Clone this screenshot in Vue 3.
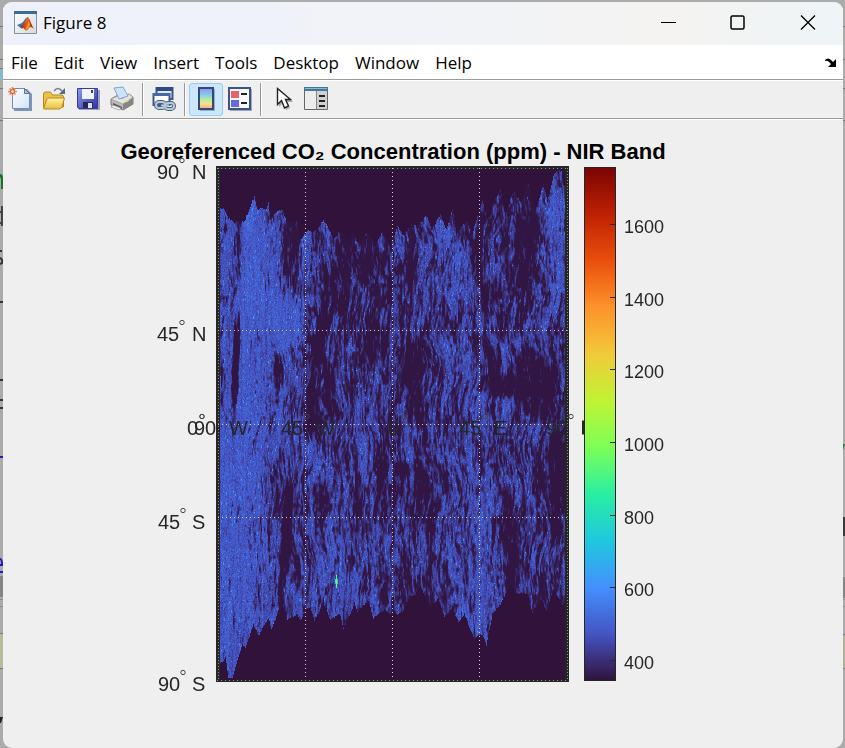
<script setup>
import { onMounted, ref } from 'vue'

const menus = ['File', 'Edit', 'View', 'Insert', 'Tools', 'Desktop', 'Window', 'Help']

const turbo = ['#30123b', '#4454c4', '#4490fe', '#1fc8de', '#29efa2', '#7dff56', '#c1f334', '#f1ca3a', '#fe922a', '#ea4f0d', '#be2102', '#7a0403']

const latLabels = [
  { num: '90', hemi: 'N', x: 157, y: 179, cx: 182 },
  { num: '45', hemi: 'N', x: 157, y: 341, cx: 182 },
  { num: '0', hemi: '', x: 187, y: 435, cx: 202 },
  { num: '45', hemi: 'S', x: 158, y: 529, cx: 183 },
  { num: '90', hemi: 'S', x: 158, y: 691, cx: 183 }
]
const lonLabels = [
  { num: '90', hemi: 'W', x: 194, cx: 202 },
  { num: '45', hemi: 'W', x: 281, cx: 307 },
  { num: '0', hemi: '', x: 388, cx: 404 },
  { num: '45', hemi: 'E', x: 459, cx: 485 },
  { num: '90', hemi: '', x: 546, cx: 571 }
]
const barTicks = [
  { v: 1600, y: 225 }, { v: 1400, y: 298 }, { v: 1200, y: 370 }, { v: 1000, y: 443 },
  { v: 800, y: 516 }, { v: 600, y: 588 }, { v: 400, y: 661 }
]

const X0 = 220
const Y0 = 169
const W = 345
const H = 511

// Swath outline as x, y pairs
const top = [220, 207, 223, 206, 228, 217, 233, 220, 237, 221, 244, 220, 249, 207, 254, 195, 257, 208, 262, 207, 266, 208, 268, 201, 270, 218, 276, 210, 282, 208, 286, 220, 297, 220, 300, 238, 308, 228, 312, 232, 318, 226, 323, 219, 326, 223, 333, 238, 338, 230, 344, 234, 348, 239, 352, 232, 358, 242, 367, 230, 374, 245, 382, 230, 390, 246, 397, 224, 403, 234, 411, 223, 418, 224, 426, 214, 431, 228, 440, 213, 446, 228, 452, 207, 456, 232, 466, 220, 472, 232, 477, 214, 482, 200, 487, 218, 495, 197, 500, 188, 505, 213, 513, 189, 520, 200, 528, 181, 535, 210, 543, 183, 547, 200, 553, 175, 556, 169, 561, 170, 563, 184, 565, 183]
const bottom = [220, 664, 225, 658, 228, 678, 232, 678, 242, 645, 245, 649, 253, 625, 258, 636, 268, 619, 271, 630, 279, 609, 284, 608, 287, 621, 297, 615, 300, 621, 305, 610, 310, 608, 314, 621, 323, 604, 330, 620, 339, 614, 343, 629, 352, 610, 354, 602, 357, 612, 368, 601, 373, 619, 384, 610, 391, 617, 402, 612, 408, 600, 415, 595, 420, 587, 429, 606, 438, 600, 444, 617, 452, 608, 458, 623, 464, 614, 470, 630, 474, 639, 480, 634, 483, 637, 486, 646, 492, 614, 500, 605, 510, 585, 516, 594, 527, 594, 532, 614, 541, 600, 546, 611, 553, 590, 562, 606, 565, 600]

// Coverage of valid samples on a coarse 13 by 11 grid
const cover = [
  [70, 92, 60, 48, 46, 44, 44, 46, 56, 50, 40, 54, 80],
  [66, 99, 62, 52, 46, 42, 50, 54, 62, 52, 44, 50, 84],
  [66, 99, 76, 52, 50, 46, 50, 56, 62, 50, 48, 48, 75],
  [70, 97, 88, 48, 52, 48, 46, 50, 62, 54, 52, 48, 60],
  [74, 96, 78, 46, 56, 54, 44, 48, 60, 50, 52, 38, 46],
  [80, 95, 74, 46, 54, 56, 46, 46, 55, 56, 54, 34, 40],
  [92, 94, 62, 60, 56, 52, 46, 46, 52, 60, 50, 46, 38],
  [94, 88, 58, 52, 58, 52, 46, 42, 54, 70, 52, 48, 44],
  [90, 88, 58, 50, 62, 60, 46, 44, 52, 74, 50, 48, 44],
  [94, 82, 66, 54, 58, 64, 48, 44, 48, 72, 50, 48, 44],
  [94, 80, 70, 54, 58, 64, 48, 44, 48, 76, 48, 46, 44]
]

// Local gaps (negative) and dense areas: x, y, half width, half height, lean, strength
const patches = [
  [292, 254, 7, 38, 0, -1], [340, 272, 8, 48, -0.08, -0.7], [367, 255, 6, 32, 0, -0.7], [314, 378, 6, 52, -0.12, -1],
  [235, 368, 3, 50, -0.04, -1.5], [278, 370, 6, 16, 0, -1.1], [330, 376, 6, 12, 0, -0.9], [412, 366, 9, 26, 0, -0.8],
  [417, 408, 9, 18, 0, -0.9], [425, 480, 9, 42, 0.05, -0.7], [534, 384, 15, 30, 0.2, -1.1], [502, 385, 22, 11, 0.4, -0.9],
  [526, 236, 9, 56, -0.05, -0.8], [285, 540, 4, 62, -0.07, -1.5], [557, 475, 8, 50, 0, -0.8], [510, 545, 8, 46, 0, -0.9],
  [323, 290, 4, 50, 0, -0.8], [270, 494, 9, 26, 0, -0.5], [320, 500, 7, 20, 0, -0.5], [237, 240, 4, 42, -0.05, -0.9],
  [376, 342, 8, 18, 0, -0.8], [411, 262, 4, 40, 0, -0.6], [358, 492, 4, 24, 0, -0.7],
  [330, 395, 5, 22, 0, -0.6], [493, 365, 6, 20, 0, -0.7], [479, 250, 3, 50, 0, -0.7],
  [380, 468, 6, 20, 0, -0.6],
  [254, 250, 9, 60, 0, 0.6], [288, 318, 14, 24, 0, 0.8], [508, 360, 7, 20, 0, 0.5],
  [490, 408, 24, 14, 0, 0.3], [453, 262, 9, 30, 0, 0.3], [442, 230, 6, 20, 0, 0.5],
  [458, 590, 5, 42, 0.2, 0.5], [334, 560, 9, 30, 0, 0.4], [310, 460, 9, 20, 0, 0.4], [404, 452, 10, 9, 0, 0.5],
  [555, 250, 8, 60, -0.05, 0.3], [300, 260, 5, 26, -0.2, 0.6], [322, 250, 5, 26, -0.15, 0.5]
]

function hash(x, y, s) {
  let h = Math.imul(x, 374761393) ^ Math.imul(y, 668265263) ^ Math.imul(s, 2147483556)
  h = Math.imul(h ^ (h >>> 13), 1274126177)
  h = Math.imul(h ^ (h >>> 15), 2246822519)
  return ((h ^ (h >>> 16)) >>> 0) / 4294967296
}
function noise(x, y, s) {
  const xi = Math.floor(x)
  const yi = Math.floor(y)
  let fx = x - xi
  let fy = y - yi
  fx = fx * fx * (3 - 2 * fx)
  fy = fy * fy * (3 - 2 * fy)
  const a = hash(xi, yi, s) * (1 - fx) + hash(xi + 1, yi, s) * fx
  const b = hash(xi, yi + 1, s) * (1 - fx) + hash(xi + 1, yi + 1, s) * fx
  return a * (1 - fy) + b * fy
}
function edge(points, x) {
  let i = 0
  while (i < points.length - 4 && points[i + 2] < x) i += 2
  const f = Math.min(1, Math.max(0, (x - points[i]) / (points[i + 2] - points[i])))
  return points[i + 1] + (points[i + 3] - points[i + 1]) * f
}
function coverage(x, y) {
  const gx = Math.min(11.999, x / W * 12)
  const gy = Math.min(9.999, Math.max(0, (y - 21) / 45))
  const i = Math.floor(gx)
  const j = Math.floor(gy)
  const fx = gx - i
  const fy = gy - j
  let c = ((cover[j][i] * (1 - fx) + cover[j][i + 1] * fx) * (1 - fy) +
    (cover[j + 1][i] * (1 - fx) + cover[j + 1][i + 1] * fx) * fy) / 100
  for (const [px, py, rx, ry, lean, k] of patches) {
    const dy = y + Y0 - py
    const dx = x + X0 - px - dy * lean
    const d = (dx / rx) ** 2 + (dy / ry) ** 2
    if (d < 2) c += k * 0.38 * Math.min(1, (2 - d) * 0.7)
  }
  return c
}
const rgb = turbo.map(c => [1, 3, 5].map(i => parseInt(c.slice(i, i + 2), 16)))
function colour(t) {
  const p = Math.min(10.999, Math.max(0, t * 11))
  const i = Math.floor(p)
  return rgb[i].map((v, k) => v + (rgb[i + 1][k] - v) * (p - i))
}

const map = ref(null)

onMounted(() => {
  const ctx = map.value.getContext('2d')
  const img = ctx.createImageData(W, H)
  for (let x = 0; x < W; x++) {
    const t0 = edge(top, x + X0) - Y0 + hash(x, 1, 9) * 2
    const b0 = edge(bottom, x + X0) - Y0 - hash(x, 2, 9) * 2
    for (let y = 0; y < H; y++) {
      let t = 0
      if (y >= t0 && y <= b0) {
        const wx = x + 9 * noise(x / 30, y / 40, 7)
        const n = 0.24 * noise(wx / 3.2, y / 26, 1) + 0.32 * noise(wx / 1.6, y / 10, 2) +
          0.16 * noise(wx / 8, y / 30, 3) + 0.28 * noise(wx / 1.2, y / 4, 4)
        const c = coverage(x, y)
        const m = Math.min(1, Math.max(0, (n - 0.5 + (c - 0.5) * 0.55) / 0.22 + 0.44))
        const grain = hash(x, y, 5) * 0.6 + hash(x, y >> 1, 15) * 0.4
        const dense = Math.min(1, Math.max(0, c - 0.4))
        const bright = 0.056 + 0.032 * dense + 0.034 * noise(x / 1.5, y / 26, 6)
        t = 0.006 + m * (bright + (grain - 0.5) * 0.07)
        if (m > 0.5 && hash(x, Math.floor(y / 3), 8) > 0.975) t += 0.035 + 0.035 * grain
        if (m > 0.6 && hash(x, y, 11) > 0.996) t += 0.1
      }
      const gx = Math.abs(x + X0 - 336)
      if (gx < 2 && Math.abs(y + Y0 - 581) < 7 - gx * 4) t = (gx ? 0.24 : 0.36) + 0.14 * hash(x, y, 12)
      const o = (y * W + x) * 4
      const col = colour(t)
      img.data[o] = col[0]
      img.data[o + 1] = col[1]
      img.data[o + 2] = col[2]
      img.data[o + 3] = 255
    }
  }
  ctx.putImageData(img, 0, 0)
})
</script>

<template>
  <div class="desktop">
    <svg class="behind left" width="3" height="748" aria-hidden="true">
      <path d="M0 26.500h3M0 59.500h3M0 68.500h3M0 88.500h3M0 120.500h3" stroke="#777" />
      <path d="M0 69h3v11H0z" fill="#86b9d3" />
      <path d="M0 174q3 0 3 4v11H1v-10l-1-2z" fill="#17752a" />
      <path d="M0 211h1v-5h2v20H1v-2H0v-2h1v-9H0z" fill="#444" />
      <path d="M0 251h2M0 258q3 1 2 5l-2 1M0 302h3M0 380h3M0 400h3M0 408h3" stroke="#333" stroke-width="2" fill="none" />
      <path d="M0 457h3M0 559q2 0 2 6H0M0 572h3" stroke="#2318c8" stroke-width="2" fill="none" />
      <path d="M0 576h3v21H0z" fill="#858585" />
      <path d="M0 599.500h3M0 606.500h3" stroke="#8c8c8c" />
      <path d="M0 634h3v34H0z" fill="#b9b99c" />
      <path d="M0 633.500h3M0 668.500h3" stroke="#777" />
      <path d="M0 717h3l-2 6H0z" fill="#222" />
    </svg>
    <svg class="behind right" width="3" height="748" aria-hidden="true">
      <path d="M0 26.500h3M0 59.500h3M0 88.500h3M0 120.500h3" stroke="#777" />
      <path d="M0 444h3l-2 6H0z" fill="#1f8035" />
      <path d="M0 517h3v19H0z" fill="#3c3c3c" />
      <path d="M0 577h3v21H0z" fill="#858585" />
      <path d="M0 599.500h3M0 606.500h3" stroke="#8c8c8c" />
      <path d="M0 634h3v34H0z" fill="#b0b095" />
      <path d="M0 634.500h3M0 668.500h3" stroke="#777" />
    </svg>

    <main class="window">
      <header class="titlebar">
        <svg class="logo" width="24" height="24" viewBox="0 0 24 24" aria-hidden="true">
          <defs>
            <linearGradient id="logoBg" x2="1" y2="1"><stop stop-color="#fff" /><stop offset="1" stop-color="#d4dae0" /></linearGradient>
            <linearGradient id="logoFlame"><stop stop-color="#8c1d12" /><stop offset=".5" stop-color="#e8641b" /><stop offset="1" stop-color="#8d1c13" /></linearGradient>
          </defs>
          <path d="M.5.5h22v22H.5z" fill="url(#logoBg)" stroke="#8b9199" />
          <path d="M0 0h23v3H0z" fill="#3c6a9c" />
          <path d="M3 14l5-2 4-5 2-1-3 7-3 5z" fill="#3a78b5" />
          <path d="M6 16c4-2 5-8 8-10 2 2 3 7 6 12-2-2-4-3-5-1-2 3-3 3-4 2-1-2-3-3-5-3z" fill="url(#logoFlame)" />
          <path d="M14 6c1 4 1 7-3 13 3-1 4-3 5-5z" fill="#f4a028" />
        </svg>
        <h1>Figure 8</h1>
        <div class="controls">
          <button aria-label="Minimize"><svg width="16" height="16"><path d="M1 7.500h15" stroke="#000" /></svg></button>
          <button aria-label="Maximize"><svg width="16" height="16"><rect x="1" y="1" width="13" height="13" rx="1.500" fill="none" stroke="#000" stroke-width="1.500" /></svg></button>
          <button aria-label="Close"><svg width="16" height="16"><path d="M1 .5l14 14M15 .5l-14 14" stroke="#000" stroke-width="1.300" /></svg></button>
        </div>
      </header>

      <nav class="menubar">
        <button v-for="m in menus" :key="m">{{ m }}</button>
        <button class="dock" aria-label="Dock figure">
          <svg width="12" height="9" viewBox="0 0 12 9"><path d="M0 2q3-3 6 0l2 2 3-3v8H3l3-3-2-2Q2 2 0 3z" fill="#000" /></svg>
        </button>
      </nav>

      <div class="toolbar" role="toolbar" aria-label="Figure toolbar">
        <button aria-label="New figure">
          <svg width="26" height="26" viewBox="0 0 26 26">
            <defs><linearGradient id="paper" x2="1" y2="1"><stop stop-color="#fff" /><stop offset="1" stop-color="#cfe3f7" /></linearGradient></defs>
            <path d="M7 3h13l5 5v17H7z" fill="#7f93b4" />
            <path d="M5.500 2.500h12l5 5v15h-17z" fill="url(#paper)" stroke="#6f8db8" />
            <path d="M17.500 2.500v5h5z" fill="#a9bfdd" stroke="#56729f" />
            <path d="M5.500 1v9M1 5.500h9M2.500 2.500l6 6M8.500 2.500l-6 6" stroke="#e7825c" stroke-width="1.500" />
            <circle cx="5.500" cy="5.500" r="2" fill="#ffd5a0" stroke="#d95432" />
          </svg>
        </button>
        <button aria-label="Open file">
          <svg width="26" height="26" viewBox="0 0 26 26">
            <defs><linearGradient id="folder" x2="0" y2="1"><stop stop-color="#fff5a8" /><stop offset="1" stop-color="#e9bd3c" /></linearGradient></defs>
            <path d="M2.500 21V8q0-2 2-2h5l2 3h9q2 0 2 2v10z" fill="#e8c04c" stroke="#b88a18" />
            <path d="M2.500 22.500L6 13q0-1 2-1h15.500L21 21q-1 2-3 2H4q-2 0-1.500-.5z" fill="url(#folder)" stroke="#b98912" />
            <path d="M13 5q4-5 8 0" fill="none" stroke="#6c8294" stroke-width="1.500" /><path d="M24 2v6h-6z" fill="#526c80" />
          </svg>
        </button>
        <button aria-label="Save figure">
          <svg width="26" height="26" viewBox="0 0 26 26">
            <defs><linearGradient id="disk" x2="1" y2="1"><stop stop-color="#8c9ce9" /><stop offset="1" stop-color="#3030a6" /></linearGradient></defs>
            <path d="M4 4h21v20H4z" fill="#a1a1bd" />
            <path d="M2.500 2.500h20v20h-19l-1-1z" fill="url(#disk)" stroke="#343b9d" />
            <path d="M7 3h12v10H7z" fill="#eef5fc" /><path d="M16 4h2v3h-2z" fill="#445" />
            <path d="M8 16h10v6H8z" fill="#27275a" /><path d="M13 17h4v5h-4z" fill="#dde2ef" />
          </svg>
        </button>
        <button aria-label="Print figure">
          <svg width="26" height="26" viewBox="0 0 26 26">
            <path d="M2 13l7-4 3 3 8-4 4 3v7l-10 6-12-5z" fill="#b9b9b9" stroke="#777" />
            <path d="M2 13l12 5 10-7-4-3-7 5-4-3z" fill="#e4e4e2" stroke="#999" stroke-width=".6" />
            <path d="M5 2l9-1 5 9-9 3z" fill="#cbe3fb" stroke="#86a3c8" />
            <path d="M14 18v6l10-6v-6z" fill="#858585" /><path d="M4 17l9 4v2l-9-4z" fill="#555" /><path d="M4 19l8 3-2 2-8-3z" fill="#eee" stroke="#888" stroke-width=".6" />
            <path d="M17 16l3-2" stroke="#d6e257" stroke-width="1.500" />
          </svg>
        </button>
        <span class="sep"></span>
        <button aria-label="Link plot">
          <svg width="26" height="26" viewBox="0 0 26 26">
            <path d="M5.500 2h16v11h-16z" fill="#dce6f4" stroke="#3c5689" stroke-width="2" /><path d="M5 1h17v4H5z" fill="#2f4b82" />
            <path d="M2.500 8h16v11h-16z" fill="#fff" stroke="#3c5689" stroke-width="2" /><path d="M2 7h17v3H2z" fill="#4669a2" />
            <g fill="none" stroke="#4b6078" stroke-width="4"><rect x="5" y="16" width="9" height="6" rx="3" /><rect x="14" y="17" width="9" height="6" rx="3" /></g>
            <g fill="none" stroke="#b6c9dd" stroke-width="2"><rect x="5" y="16" width="9" height="6" rx="3" /><rect x="14" y="17" width="9" height="6" rx="3" /><path d="M10 19.500h8" /></g>
          </svg>
        </button>
        <span class="sep"></span>
        <button class="on" aria-label="Insert colorbar" aria-pressed="true">
          <svg width="26" height="26" viewBox="0 0 26 26">
            <defs><linearGradient id="bars" x2="0" y2="1"><stop stop-color="#9c8be8" /><stop offset=".3" stop-color="#83c8ef" /><stop offset=".55" stop-color="#b4eba0" /><stop offset=".75" stop-color="#f6e28a" /><stop offset="1" stop-color="#f4a08b" /></linearGradient></defs>
            <path d="M7 3h15v22H7z" fill="#99aac6" /><path d="M6 2h14v21H6z" fill="url(#bars)" stroke="#33497d" stroke-width="2" />
          </svg>
        </button>
        <button aria-label="Insert legend">
          <svg width="26" height="26" viewBox="0 0 26 26">
            <path d="M3 3h22v22H3z" fill="#9ba9c4" /><path d="M2 2h21v21H2z" fill="#f7f9fe" stroke="#3d5488" stroke-width="2" />
            <path d="M4 5h8v7H4z" fill="#e86464" /><path d="M4 14h8v7H4z" fill="#6969e3" /><path d="M14 8h6M14 17h6" stroke="#222" stroke-width="2" />
          </svg>
        </button>
        <span class="sep"></span>
        <button aria-label="Edit plot">
          <svg width="26" height="26" viewBox="0 0 26 26">
            <path d="M10 4v17l4-4 3 7 4-2-3-6h6z" fill="#aaa" /><path d="M8.500 2.500v16l4-4 3 7.500 4-2-3-6.500h5z" fill="#fff" stroke="#222" stroke-width="1.400" />
          </svg>
        </button>
        <button aria-label="Open property inspector">
          <svg width="26" height="26" viewBox="0 0 26 26">
            <path d="M1.500 1.500h23v22h-23z" fill="#f4f4f4" stroke="#666" /><path d="M1 1h24v4H1z" fill="#42789c" /><path d="M2 2h22v1H2z" fill="#8bb7cf" />
            <path d="M2 5h11v18H2z" fill="#ededed" /><path d="M13.500 5v18" stroke="#888" /><path d="M14 5h10v18H14z" fill="#cfcfcf" />
            <path d="M16 10h6M16 15h6M16 20h6" stroke="#222" stroke-width="2" />
          </svg>
        </button>
      </div>

      <section class="figure">
        <svg class="chart" viewBox="3 119 840 629" role="img" aria-label="CO2 concentration map">
          <defs>
            <linearGradient id="turbo" x1="0" y1="1" x2="0" y2="0">
              <stop v-for="(c, i) in turbo" :key="c" :offset="i / 11" :stop-color="c" />
            </linearGradient>
          </defs>

          <text class="title" x="393" y="159" text-anchor="middle">Georeferenced CO₂ Concentration (ppm) - NIR Band</text>

          <rect x="216" y="166" width="353" height="516" fill="#262626" />
          <foreignObject :x="X0" :y="Y0" :width="W" :height="H">
            <canvas ref="map" :width="W" :height="H"></canvas>
          </foreignObject>

          <g class="frame">
            <path d="M217 168.500H568M217 680.500H568" stroke-dasharray="1 3" />
            <path d="M218.500 168V681M567.500 168V681" stroke-dasharray="1 2" />
          </g>
          <g class="grid">
            <path d="M305.500 168V680M392.500 168V680M479.500 168V680" />
            <path d="M218 330.500H567M218 424.500H567M218 517.500H567" />
          </g>

          <g class="axis">
            <g v-for="l in latLabels" :key="l.y">
              <text :x="l.x" :y="l.y">{{ l.num }}</text>
              <text :x="192" :y="l.y">{{ l.hemi }}</text>
              <circle :cx="l.cx" :cy="l.y - 18.500" r="2.200" />
            </g>
            <g v-for="l in lonLabels" :key="l.x">
              <text :x="l.x" y="435">{{ l.num }}</text>
              <text :x="l.x + 35" y="435">{{ l.hemi }}</text>
              <circle :cx="l.cx" cy="416.500" r="2.200" />
            </g>
            <path d="M583 420.500v14" stroke="#262626" stroke-width="2" />
          </g>

          <rect x="584.500" y="167.500" width="31" height="513" fill="url(#turbo)" stroke="#262626" />
          <g class="ticks">
            <g v-for="t in barTicks" :key="t.v">
              <path :d="`M610 ${t.y - 0.5}h5`" />
              <text x="624" :y="t.y + 8">{{ t.v }}</text>
            </g>
          </g>
        </svg>
      </section>
    </main>
  </div>
</template>

<style>
body {
  background: #ababab;
}
</style>

<style scoped>
.desktop {
  box-sizing: border-box;
  min-height: 100vh;
  padding: 2px 2px 0 3px;
  display: flex;
  position: relative;
  overflow: hidden;
  background: #ababab;
}
.behind {
  position: absolute;
  top: 0;
}
.left {
  left: 0;
}
.right {
  right: 0;
}
.window {
  position: relative;
  flex: 1;
  min-width: 0;
  display: flex;
  flex-direction: column;
  border-radius: 9px;
  overflow: hidden;
  background: #efefef;
  font-family: "Open Sans", "Noto Sans", sans-serif;
  font-size: 17px;
  color: #000;
}
button {
  border: 0;
  padding: 0;
  background: none;
  font: inherit;
  color: inherit;
}
.titlebar {
  display: flex;
  align-items: center;
  height: 41px;
  padding: 0 0 2px 11px;
  gap: 5px;
  background: linear-gradient(90deg, #eef1fa, #f1f3f8 50%, #f4f3f1 80%, #eef4f7);
}
h1 {
  margin: 0;
  flex: 1;
  font-size: 17px;
  font-weight: 400;
}
.controls {
  display: flex;
}
.controls button {
  width: 70px;
  height: 41px;
  display: grid;
  place-items: center;
}
.menubar {
  display: flex;
  align-items: center;
  gap: 16px;
  height: 34px;
  padding: 0 6px 0 8px;
  background: #fff;
}
.dock {
  margin-left: auto;
  display: grid;
}
.toolbar {
  display: flex;
  align-items: center;
  height: 38px;
  border-top: 1px solid #9b9b9b;
  border-bottom: 1px solid #9b9b9b;
  box-shadow: inset 0 1px #fff, 0 1px #fff;
}
.toolbar button {
  box-sizing: border-box;
  width: 34px;
  height: 33px;
  display: grid;
  place-items: center;
  border: 1px solid transparent;
  border-radius: 3px;
}
.toolbar .on {
  background: #cce6fb;
  border-color: #94cdf6;
}
.sep {
  box-sizing: border-box;
  width: 5px;
  margin-left: 3px;
  height: 33px;
  border-left: 1px solid #999;
  box-shadow: inset 1px 0 #fff;
}
.figure {
  flex: 1;
}
.chart {
  display: block;
  width: 100%;
  font-family: "Liberation Sans", Arial, sans-serif;
}
canvas {
  display: block;
}
.title {
  font-size: 22px;
  font-weight: 700;
}
.axis text {
  font-size: 20px;
  fill: #262626;
}
.axis circle {
  fill: none;
  stroke: #444;
  stroke-width: 1px;
}
.ticks text {
  font-size: 18px;
  fill: #262626;
}
.ticks path {
  stroke: #262626;
}
.frame path {
  fill: none;
  stroke: #8c9488;
}
.grid path {
  fill: none;
  stroke: #d5d0c8;
  stroke-dasharray: 1 3;
}
</style>
